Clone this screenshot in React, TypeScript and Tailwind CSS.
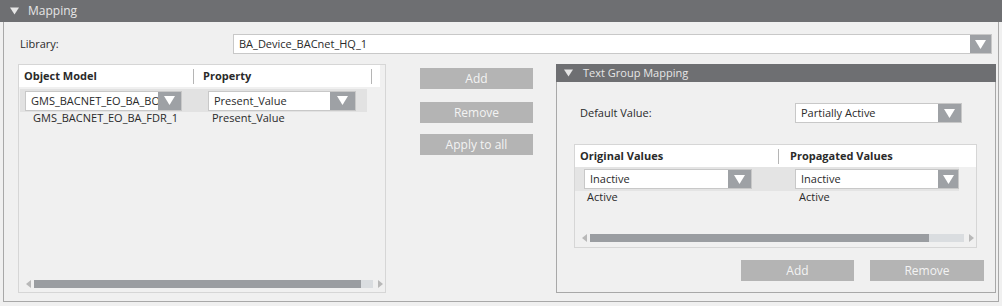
import React from "react";

const font = { fontFamily: '"Segoe UI", "Open Sans", "Noto Sans", sans-serif' };

function Tri({ className = "" }: { className?: string }) {
    return (
        <svg width="10" height="8" viewBox="0 0 10 8" className={className}>
            <path d="M0 0 H10 L5 8 Z" fill="currentColor" />
        </svg>
    );
}

function Dropdown({ value, className, arrowW = "w-[23px]" }: { value: string; className: string; arrowW?: string }) {
    return (
        <div className={`flex bg-white border border-[#c8c8c8] h-[20px] ${className}`}>
            <div className="flex-1 min-w-0 pl-[5px] leading-[17px] overflow-hidden whitespace-nowrap">{value}</div>
            <div className={`${arrowW} shrink-0 bg-[#9ea1a5] text-white flex items-center justify-center`}>
                <Tri className="w-[11px] h-[9px]" />
            </div>
        </div>
    );
}

function Btn({ label, className = "" }: { label: string; className?: string }) {
    return (
        <div className={`h-[21px] bg-[#b4b4b4] text-[#f3f3f3] text-[12px] flex items-center justify-center ${className}`}>{label}</div>
    );
}

function ScrollBar({ thumb, track }: { thumb: string; track: string }) {
    return (
        <div className="flex items-center h-[8px]">
            <svg width="5" height="8" viewBox="0 0 5 8" className="ml-[7px] text-[#b8b8b8]"><path d="M5 0 V8 L0 4 Z" fill="currentColor" /></svg>
            <div className={`${thumb} h-[8px] bg-[#9a9da1] ml-[3px]`} />
            <div className={`${track} h-[8px] bg-[#dadde0]`} />
            <svg width="5" height="8" viewBox="0 0 5 8" className="ml-[5px] text-[#b8b8b8]"><path d="M0 0 V8 L5 4 Z" fill="currentColor" /></svg>
        </div>
    );
}

export default function App() {
    return (
        <div className="w-[1002px] h-[306px] bg-[#f0f0f0] text-[11px] text-[#2a2a2a]" style={font}>
            <div className="h-[22px] bg-[#6e6f72] flex items-center pl-[10px] text-[#e6e6e6] text-[12px]">
                <Tri className="w-[9px] h-[8px]" />
                <span className="ml-[9px]">Mapping</span>
            </div>
            <div className="mx-[3px] h-[280px] border border-t-0 border-[#a8a8a8] bg-[#f0f0f0] flex flex-col">
                <div className="flex items-center mt-[12px] h-[20px]">
                    <div className="w-[229px] pl-[16px]">Library:</div>
                    <Dropdown value="BA_Device_BACnet_HQ_1" className="flex-1 mr-[6px]" arrowW="w-[21px]" />
                </div>

                <div className="flex mt-[10px]">
                    {/* object model / property table */}
                    <div className="ml-[14px] w-[368px] h-[229px] border border-[#d6d6d6] flex flex-col">
                        <div className="h-[22px] flex items-center font-bold">
                            <div className="h-full flex items-center bg-white w-[361px]">
                                <div className="w-[174px] pl-[5px]">Object Model</div>
                                <div className="w-px h-[15px] bg-[#b5b5b5]" />
                                <div className="w-[177px] pl-[9px]">Property</div>
                                <div className="w-px h-[15px] bg-[#b5b5b5]" />
                            </div>
                        </div>
                        <div className="h-[23px] mt-[2px] flex items-center bg-[#e2e2e2] w-[347px] ml-[1px]">
                            <Dropdown value="GMS_BACNET_EO_BA_BO_1" className="w-[157px] ml-[5px]" />
                            <Dropdown value="Present_Value" className="w-[148px] ml-[26px]" arrowW="w-[25px]" />
                        </div>
                        <div className="flex h-[12px] leading-[12px]">
                            <div className="w-[193px] pl-[14px]">GMS_BACNET_EO_BA_FDR_1</div>
                            <div>Present_Value</div>
                        </div>
                        <div className="flex-1" />
                        <div className="mb-[4px]">
                            <ScrollBar thumb="w-[327px]" track="w-[12px]" />
                        </div>
                    </div>

                    {/* action buttons */}
                    <div className="ml-[34px] w-[113px] flex flex-col">
                        <Btn label="Add" className="mt-[4px]" />
                        <Btn label="Remove" className="mt-[13px]" />
                        <Btn label="Apply to all" className="mt-[11px]" />
                    </div>

                    {/* text group mapping */}
                    <div className="ml-[23px] w-[440px] h-[229px] flex flex-col">
                        <div className="h-[18px] bg-[#6e6f72] flex items-center pl-[8px] text-[#e6e6e6]">
                            <Tri className="w-[9px] h-[8px]" />
                            <span className="ml-[10px]">Text Group Mapping</span>
                        </div>
                        <div className="flex-1 border border-t-0 border-[#a8a8a8] flex flex-col">
                            <div className="flex items-center mt-[21px] h-[20px]">
                                <div className="w-[238px] pl-[23px]">Default Value:</div>
                                <Dropdown value="Partially Active" className="w-[167px]" />
                            </div>
                            <div className="ml-[17px] mt-[21px] w-[403px] h-[104px] border border-[#d6d6d6] flex flex-col">
                                <div className="h-[22px] bg-white flex items-center font-bold">
                                    <div className="w-[203px] pl-[5px]">Original Values</div>
                                    <div className="w-px h-[15px] bg-[#b5b5b5]" />
                                    <div className="pl-[11px]">Propagated Values</div>
                                </div>
                                <div className="h-[24px] flex items-center bg-[#e4e4e4] w-[384px]">
                                    <Dropdown value="Inactive" className="w-[168px] ml-[9px]" />
                                    <Dropdown value="Inactive" className="w-[164px] ml-[43px]" arrowW="w-[20px]" />
                                </div>
                                <div className="flex h-[11px] leading-[11px]">
                                    <div className="w-[224px] pl-[12px]">Active</div>
                                    <div>Active</div>
                                </div>
                                <div className="flex-1" />
                                <div className="mb-[5px]">
                                    <ScrollBar thumb="w-[339px]" track="w-[35px]" />
                                </div>
                            </div>
                            <div className="flex justify-end mt-[12px] mr-[11px] gap-[16px]">
                                <Btn label="Add" className="w-[113px]" />
                                <Btn label="Remove" className="w-[114px]" />
                            </div>
                        </div>
                    </div>
                </div>
            </div>
        </div>
    );
}
